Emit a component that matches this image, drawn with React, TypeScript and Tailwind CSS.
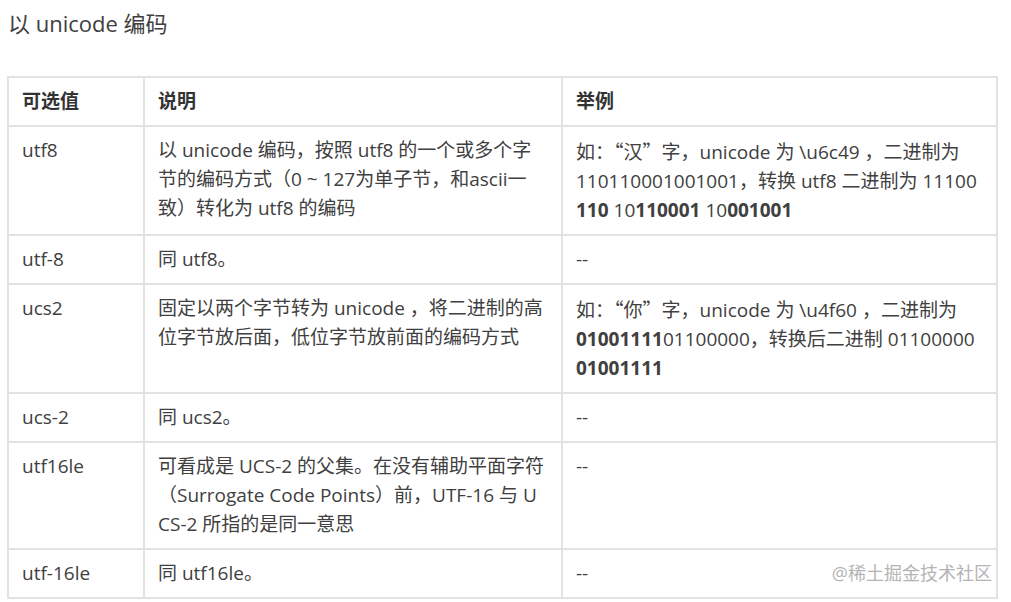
import type { ReactNode } from 'react';

type Row = { value: string; desc: ReactNode; example: ReactNode };

// Chinese-style curly quotes take a full CJK cell in the reference
const Q = ({ children }: { children: ReactNode }) => (
  <span className="font-['Noto_Sans_CJK_SC',sans-serif]">{children}</span>
);

const rows: Row[] = [
  {
    value: 'utf8',
    desc: (
      <>
        以 unicode 编码，按照 utf8 的一个或多个字
        <br />
        节的编码方式（0 ~ 127为单子节，和ascii一
        <br />
        致）转化为 utf8 的编码
      </>
    ),
    example: (
      <>
        如：<Q>“</Q>汉<Q>”</Q>字，unicode 为 \u6c49 ，二进制为
        <br />
        110110001001001，转换 utf8 二进制为 11100
        <br />
        <b>110</b> 10<b>110001</b> 10<b>001001</b>
      </>
    ),
  },
  { value: 'utf-8', desc: '同 utf8。', example: '--' },
  {
    value: 'ucs2',
    desc: (
      <>
        固定以两个字节转为 unicode ，将二进制的高
        <br />
        位字节放后面，低位字节放前面的编码方式
      </>
    ),
    example: (
      <>
        如：<Q>“</Q>你<Q>”</Q>字，unicode 为 \u4f60 ，二进制为
        <br />
        <b>01001111</b>01100000，转换后二进制 01100000
        <br />
        <b>01001111</b>
      </>
    ),
  },
  { value: 'ucs-2', desc: '同 ucs2。', example: '--' },
  {
    value: 'utf16le',
    desc: (
      <>
        可看成是 UCS-2 的父集。在没有辅助平面字符
        <br />
        （Surrogate Code Points）前，UTF-16 与 U
        <br />
        CS-2 所指的是同一意思
      </>
    ),
    example: '--',
  },
  { value: 'utf-16le', desc: '同 utf16le。', example: '--' },
];

const cell = 'border-2 border-[#e2e2e2] px-[13px] py-[9px] align-top whitespace-nowrap';

export default function App() {
  return (
    <div className="relative min-h-[602px] w-[1011px] bg-white font-['Open_Sans','Noto_Sans_CJK_SC',sans-serif] text-[#404040]">
      <h3 className="pl-2 pt-[9px] text-[22px] leading-[28px] font-normal">以 unicode 编码</h3>

      <table className="ml-[7px] mt-[39px] w-[991px] table-fixed border-collapse text-[19px] leading-[29px]">
        <colgroup>
          <col className="w-[136px]" />
          <col className="w-[418px]" />
          <col />
        </colgroup>
        <thead>
          <tr className="text-[#333] font-bold">
            <th className={`${cell} text-left`}>可选值</th>
            <th className={`${cell} text-left`}>说明</th>
            <th className={`${cell} text-left`}>举例</th>
          </tr>
        </thead>
        <tbody>
          {rows.map((row) => (
            <tr key={row.value}>
              <td className={cell}>{row.value}</td>
              <td className={cell}>{row.desc}</td>
              <td className={cell}>{row.example}</td>
            </tr>
          ))}
        </tbody>
      </table>

      {/* site watermark */}
      <div className="absolute right-[19px] top-[559px] text-[18px] leading-[28px] text-[#b4b4b4]">
        @稀土掘金技术社区
      </div>
    </div>
  );
}
